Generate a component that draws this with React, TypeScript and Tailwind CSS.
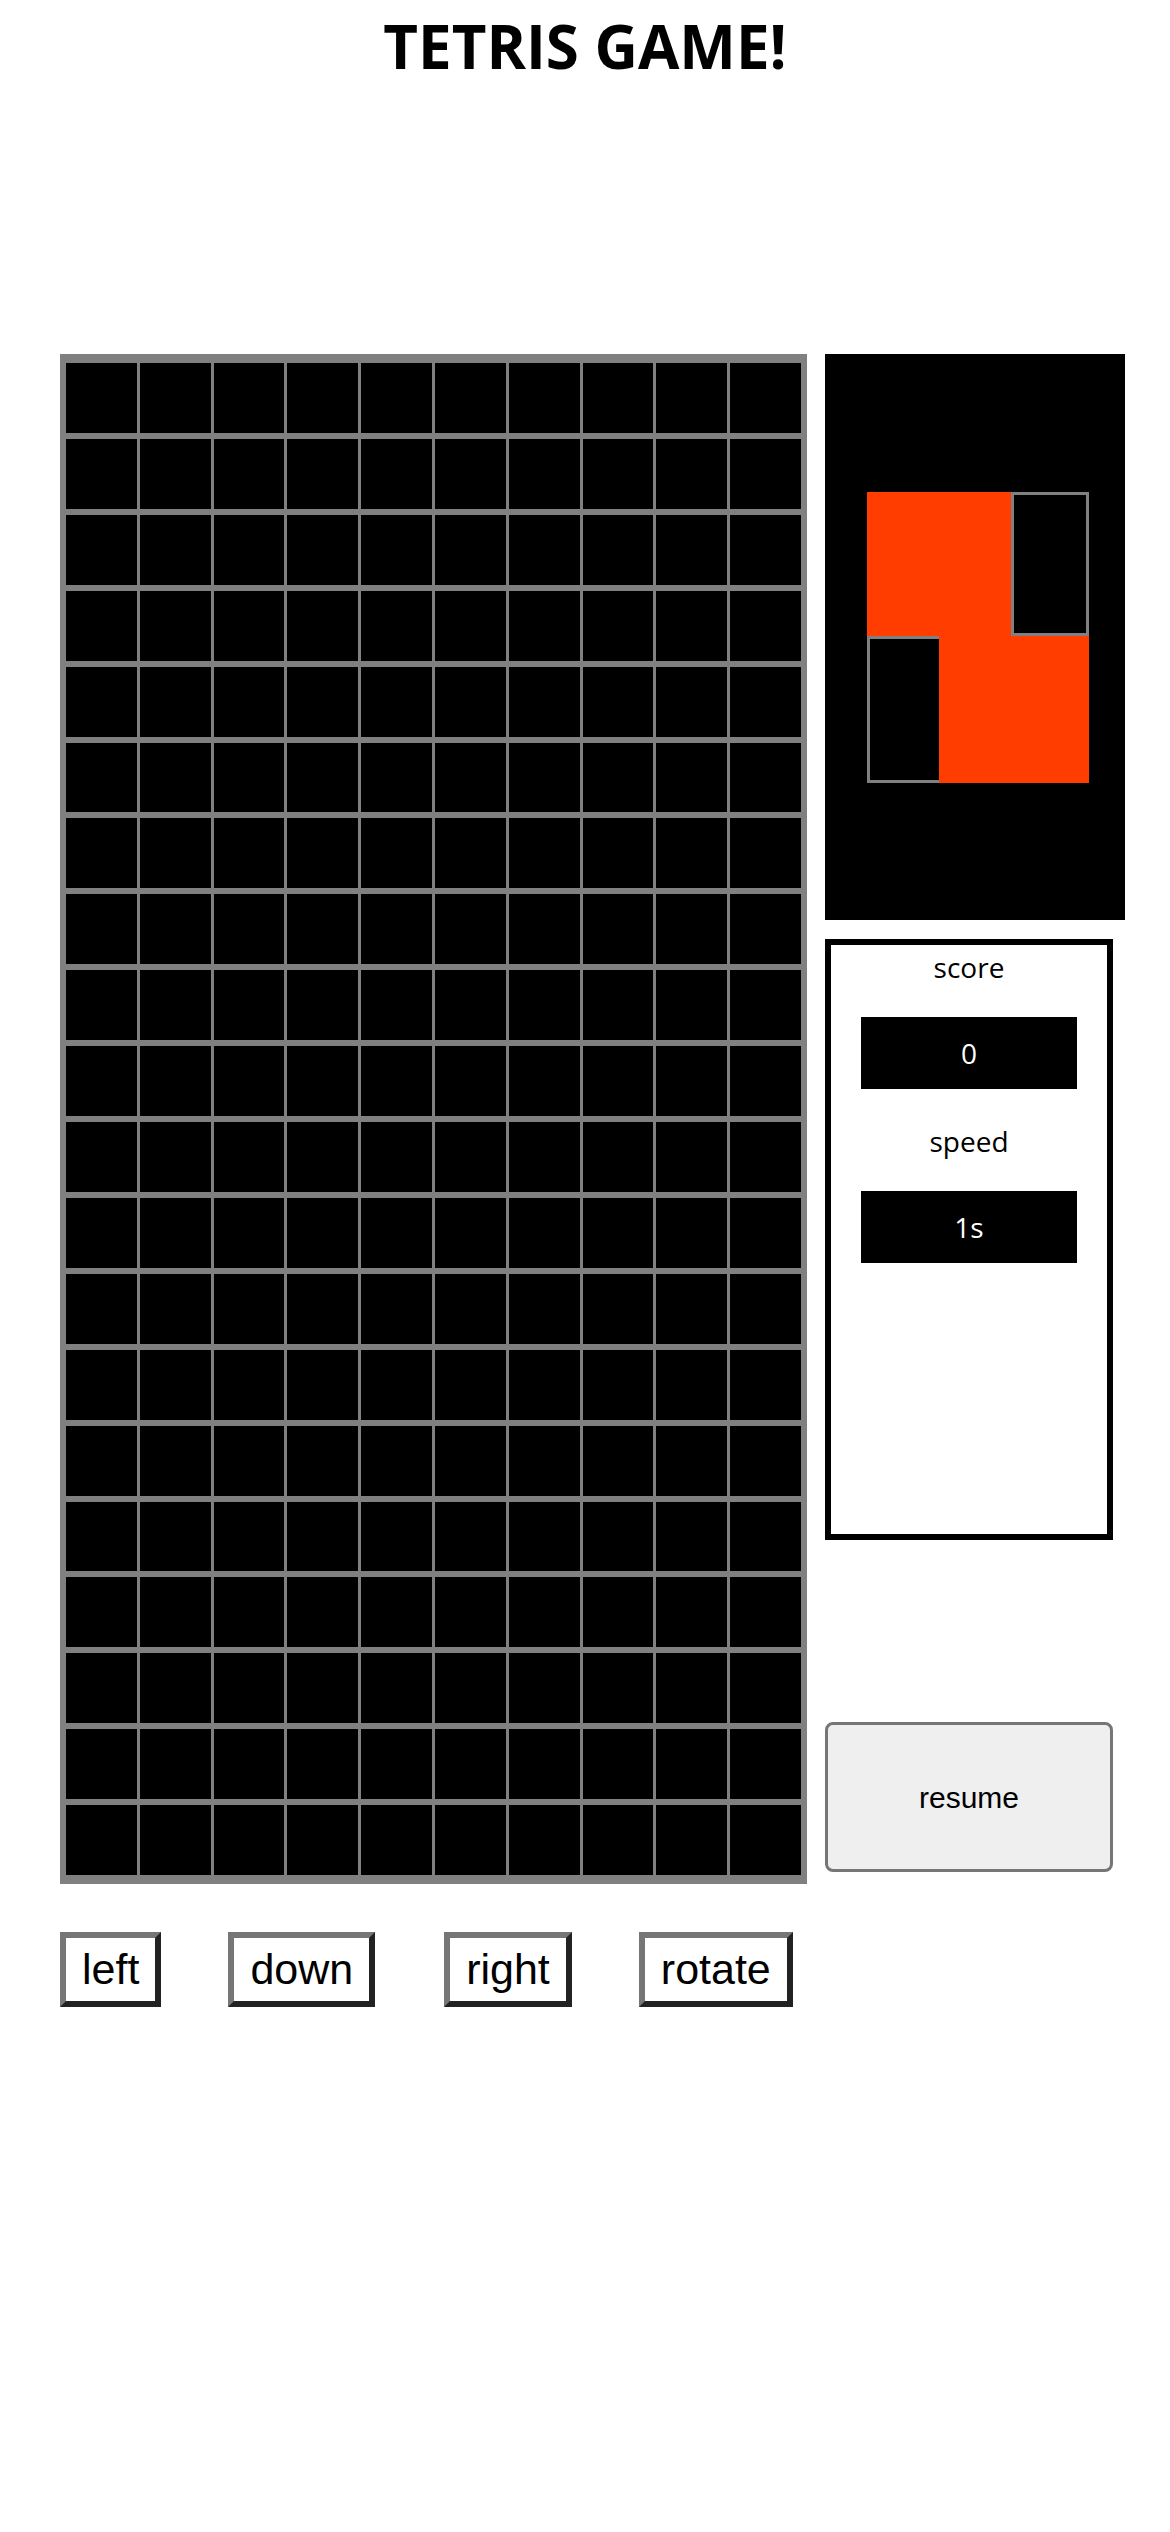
import React from "react";

const ROWS = 20;
const COLS = 10;

function Board() {
  const cells = Array.from({ length: ROWS * COLS });
  return (
    <div className="w-[747px] h-[1530px] bg-[#808080] pt-[9px] pb-[9px] pl-[6px] pr-[6px] grid grid-cols-10 grid-rows-[repeat(20,minmax(0,1fr))] gap-x-[3px] gap-y-[6px] shrink-0">
      {cells.map((_, i) => (
        <div key={i} className="bg-black" />
      ))}
    </div>
  );
}

function Preview() {
  return (
    <div className="w-[300px] h-[566px] bg-black flex items-center pl-[42px]">
      <div className="grid grid-cols-[72px_72px_78px] grid-rows-[144px_147px]">
        <div className="bg-[#ff3d00]" />
        <div className="bg-[#ff3d00]" />
        <div className="bg-black border-[3px] border-[#808080]" />
        <div className="bg-black border-[3px] border-r-0 border-[#808080]" />
        <div className="bg-[#ff3d00]" />
        <div className="bg-[#ff3d00]" />
      </div>
    </div>
  );
}

function ScorePanel() {
  return (
    <div className="w-[288px] h-[601px] border-[6px] border-black bg-white flex flex-col items-center pt-[3px] font-['Open_Sans',sans-serif] text-[28px]">
      <div className="leading-[38px] text-black">score</div>
      <div className="mt-[31px] w-[216px] h-[72px] bg-black text-white flex items-center justify-center">0</div>
      <div className="mt-[33px] leading-[38px] text-black">speed</div>
      <div className="mt-[31px] w-[216px] h-[72px] bg-black text-white flex items-center justify-center">1s</div>
    </div>
  );
}

function CtrlButton({ label, className = "" }: { label: string; className?: string }) {
  return (
    <button
      className={
        "bg-white text-black font-['Liberation_Sans',Arial,sans-serif] text-[43px] leading-[49px] px-[16px] py-[7px] border-[6px] border-t-[#767676] border-l-[#767676] border-b-[#222222] border-r-[#222222] " +
        className
      }
    >
      {label}
    </button>
  );
}

export default function App() {
  return (
    <div className="w-[1170px] min-h-[2532px] bg-white">
      <h1 className="pt-[5px] text-center font-['Open_Sans',sans-serif] font-bold text-[60px] leading-[83px] text-black">
        TETRIS GAME!
      </h1>
      <div className="mt-[266px] flex pl-[60px] gap-[18px]">
        <Board />
        <div className="flex flex-col">
          <Preview />
          <div className="mt-[19px]">
            <ScorePanel />
          </div>
          <button className="mt-[182px] w-[288px] h-[150px] bg-[#efefef] border-[3px] border-[#767676] rounded-[8px] text-black font-['Liberation_Sans',Arial,sans-serif] text-[30px]">
            resume
          </button>
        </div>
      </div>
      <div className="mt-[48px] pl-[60px] flex">
        <CtrlButton label="left" />
        <CtrlButton label="down" className="ml-[67px]" />
        <CtrlButton label="right" className="ml-[69px]" />
        <CtrlButton label="rotate" className="ml-[67px]" />
      </div>
    </div>
  );
}
